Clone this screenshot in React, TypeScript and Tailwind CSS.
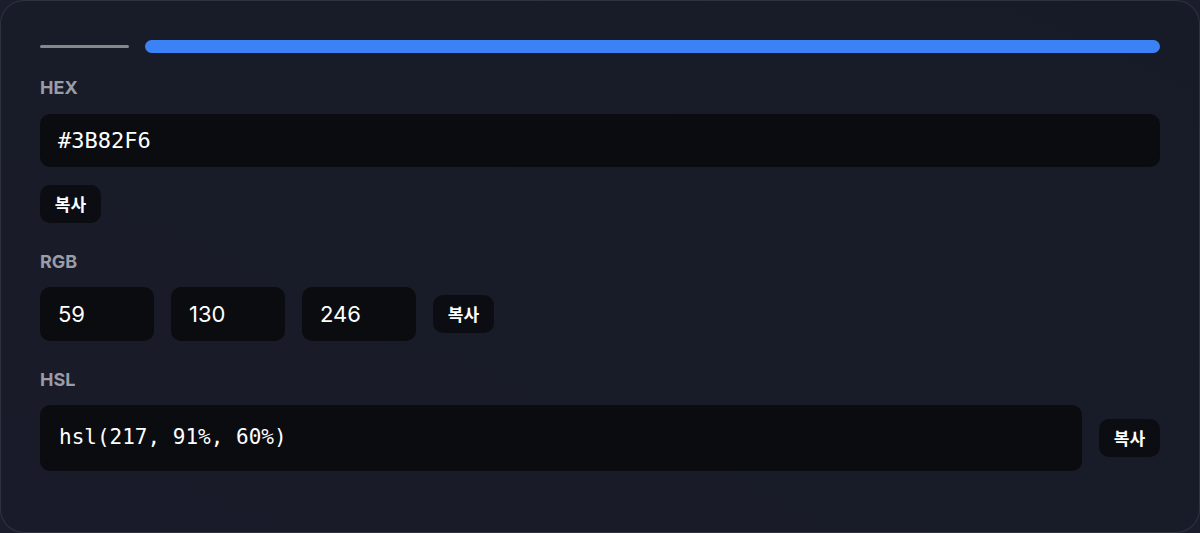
import React from "react";

const mono = "font-['DejaVu_Sans_Mono',monospace]";

function CopyButton() {
  return (
    <button className="h-[38px] w-[61px] shrink-0 rounded-[10px] bg-[#0c0d13] text-[17px] font-bold text-white font-['Noto_Sans_CJK_KR',sans-serif]">
      복사
    </button>
  );
}

function Label({ children, className = "" }: { children: React.ReactNode; className?: string }) {
  return (
    <div className={`h-6 text-[18px] font-bold leading-6 text-[#9a9ca8] ${className}`}>{children}</div>
  );
}

export default function App() {
  return (
    <div className="h-[533px] w-[1200px] bg-[#1b1d2c] font-['Inter',sans-serif]">
      <div className="h-[533px] w-full rounded-[24px] border border-white/10 bg-gradient-to-tr from-[#1a1b2a] via-[#181b28] to-[#171b27] px-[39px] pt-[39px]">
        <div className="flex h-[13px] items-center gap-4">
          <div className="h-[3px] w-[89px] rounded-full bg-[#85878d]" />
          <div className="h-[13px] flex-1 rounded-full bg-[#3b82f6]" />
        </div>

        <Label className="mt-[23px]">HEX</Label>
        <div className={`mt-[14px] flex h-[53px] items-center rounded-[10px] bg-[#0b0c10] px-[18px] text-[22px] text-white ${mono}`}>
          #3B82F6
        </div>
        <div className="mt-[18px]">
          <CopyButton />
        </div>

        <Label className="mt-[27px]">RGB</Label>
        <div className="mt-[13px] flex items-center gap-[17px]">
          {["59", "130", "246"].map((v) => (
            <div
              key={v}
              className="flex h-[54px] w-[114px] items-center rounded-[10px] bg-[#0b0c10] px-[18px] text-[22px] text-white"
            >
              {v}
            </div>
          ))}
          <CopyButton />
        </div>

        <Label className="mt-[27px]">HSL</Label>
        <div className="mt-[13px] flex items-center gap-[17px]">
          <div className={`flex h-[66px] flex-1 items-center rounded-[10px] bg-[#0b0c10] px-[19px] text-[21px] text-white ${mono}`}>
            hsl(217, 91%, 60%)
          </div>
          <CopyButton />
        </div>
      </div>
    </div>
  );
}
